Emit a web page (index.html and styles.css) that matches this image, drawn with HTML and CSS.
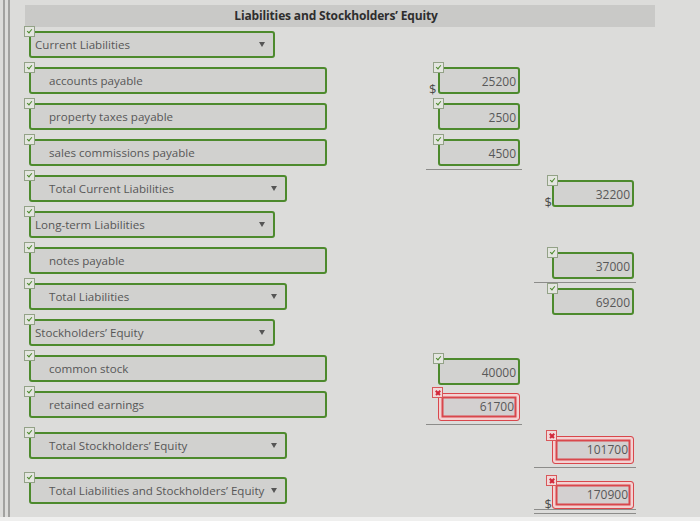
FILE: index.html
```html
<!DOCTYPE html>
<html>
<head>
<meta charset="utf-8">
<link rel="stylesheet" href="styles.css">
</head>
<body>
<div class="page">
  <div class="rail"></div>
  <div class="sheet">
    <div class="title">Liabilities and Stockholders’ Equity</div>

    <div class="row">
      <div class="field sel head"><span class="ok"></span><span class="lbl">Current Liabilities</span><span class="arrow"></span></div>
    </div>

    <div class="row">
      <div class="field txt"><span class="ok"></span><span class="lbl">accounts payable</span></div>
      <div class="mid"><span class="cur">$</span><div class="num"><span class="ok"></span>25200</div></div>
    </div>

    <div class="row">
      <div class="field txt"><span class="ok"></span><span class="lbl">property taxes payable</span></div>
      <div class="mid"><span class="cur"></span><div class="num"><span class="ok"></span>2500</div></div>
    </div>

    <div class="row">
      <div class="field txt"><span class="ok"></span><span class="lbl">sales commissions payable</span></div>
      <div class="mid line"><span class="cur"></span><div class="num"><span class="ok"></span>4500</div></div>
    </div>

    <div class="row">
      <div class="field sel total"><span class="ok"></span><span class="lbl">Total Current Liabilities</span><span class="arrow"></span></div>
      <div class="mid"></div>
      <div class="right"><span class="cur">$</span><div class="num"><span class="ok"></span>32200</div></div>
    </div>

    <div class="row">
      <div class="field sel head"><span class="ok"></span><span class="lbl">Long-term Liabilities</span><span class="arrow"></span></div>
    </div>

    <div class="row">
      <div class="field txt"><span class="ok"></span><span class="lbl">notes payable</span></div>
      <div class="mid"></div>
      <div class="right line"><span class="cur"></span><div class="num"><span class="ok"></span>37000</div></div>
    </div>

    <div class="row">
      <div class="field sel total"><span class="ok"></span><span class="lbl">Total Liabilities</span><span class="arrow"></span></div>
      <div class="mid"></div>
      <div class="right"><span class="cur"></span><div class="num"><span class="ok"></span>69200</div></div>
    </div>

    <div class="row">
      <div class="field sel head"><span class="ok"></span><span class="lbl">Stockholders’ Equity</span><span class="arrow"></span></div>
    </div>

    <div class="row">
      <div class="field txt"><span class="ok"></span><span class="lbl">common stock</span></div>
      <div class="mid low"><span class="cur"></span><div class="num"><span class="ok"></span>40000</div></div>
    </div>

    <div class="row">
      <div class="field txt"><span class="ok"></span><span class="lbl">retained earnings</span></div>
      <div class="mid low line"><span class="cur"></span><div class="num bad"><span class="no"></span>61700</div></div>
    </div>

    <div class="row r12">
      <div class="field sel total"><span class="ok"></span><span class="lbl">Total Stockholders’ Equity</span><span class="arrow"></span></div>
      <div class="mid"></div>
      <div class="right line"><span class="cur"></span><div class="num bad"><span class="no"></span>101700</div></div>
    </div>

    <div class="row r13">
      <div class="field sel total"><span class="ok"></span><span class="lbl">Total Liabilities and Stockholders’ Equity</span><span class="arrow"></span></div>
      <div class="mid"></div>
      <div class="right dline"><span class="cur">$</span><div class="num bad"><span class="no"></span>170900</div></div>
    </div>
  </div>
</div>
</body>
</html>
```

FILE: styles.css
```css
* { box-sizing: border-box; }
html, body { margin: 0; padding: 0; }
body {
  background: #dcdcda;
  font-family: "Open Sans", "Liberation Sans", sans-serif;
  color: #575757;
  width: 700px;
  height: 521px;
  overflow: hidden;
}
.page {
  display: flex;
  height: 521px;
  border-bottom: 4px solid #efefee;
}
.rail {
  margin-left: 3px;
  width: 7px;
  border-left: 2px solid #a2a2a0;
  border-right: 2px solid #a2a2a0;
  flex: none;
}
.sheet {
  flex: 1;
  padding-left: 19px;
  padding-top: 5px;
}
.title {
  margin-left: -4px;
  width: 630px;
  height: 22px;
  background: #c9c9c7;
  color: #2e2e2e;
  font-weight: 700;
  font-size: 12px;
  line-height: 22px;
  text-align: center;
  letter-spacing: -0.15px;
  padding-right: 8px;
}
.row {
  display: grid;
  grid-template-columns: 392px 110px 110px;
  grid-template-rows: 27px;
  margin-top: 4px;
  margin-bottom: 5px;
}
.row + .row { margin-top: 9px; margin-bottom: 0; }
.row.r12 { margin-top: 14px; }
.row.r13 { margin-top: 18px; }

.field {
  position: relative;
  height: 27px;
  border: 2px solid #4d8a2d;
  border-radius: 3px;
  background: #d1d1cf;
  display: flex;
  align-items: center;
  font-size: 11.6px;
  white-space: nowrap;
}
.field.txt { width: 298px; padding-left: 18px; }
.field.head { width: 246px; padding-left: 4px; }
.field.total { width: 258px; padding-left: 18px; }
.lbl { flex: 1; }
.arrow {
  width: 0;
  height: 0;
  border-left: 3px solid transparent;
  border-right: 3px solid transparent;
  border-top: 5px solid #555;
  margin-right: 8px;
}

.ok, .no {
  position: absolute;
  left: -7px;
  top: -7px;
  width: 11px;
  height: 11px;
  border: 1px solid #93a287;
  background: #e4e6e0;
}
.ok::after {
  content: "";
  position: absolute;
  left: 3px;
  top: 1px;
  width: 2px;
  height: 4px;
  border-right: 1.5px solid #4d8a2d;
  border-bottom: 1.5px solid #4d8a2d;
  transform: rotate(40deg);
}
.no {
  border-color: #d8585a;
  background: #f1d9d9;
}
.no::before, .no::after {
  content: "";
  position: absolute;
  left: 1.5px;
  top: 3.5px;
  width: 6px;
  height: 1.6px;
  background: #d2283a;
  transform: rotate(45deg);
}
.no::after { transform: rotate(-45deg); }

.mid, .right {
  position: relative;
  display: flex;
  align-items: flex-end;
  height: 27px;
}
.mid { margin-left: 5px; width: 96px; }
.right { margin-left: 3px; width: 102px; margin-top: 5px; }
.mid.low { margin-top: 3px; }
.cur {
  flex: 1;
  font-size: 13px;
  line-height: 14px;
  text-align: right;
  margin-bottom: -2px;
  color: #4a4a4a;
}
.mid .cur { flex: none; width: 12px; text-align: left; padding-left: 3px; }
.num {
  position: relative;
  width: 82px;
  height: 27px;
  border: 2px solid #4d8a2d;
  border-radius: 3px;
  background: #d2d2d0;
  font-size: 12px;
  text-align: right;
  padding-right: 2px;
  line-height: 24px;
  padding-top: 1px;
  color: #585858;
  flex: none;
}
.right .num { margin-right: 2px; }
.num.bad {
  border: 1.5px solid #d9474c;
  background: #d3d0d0;
  box-shadow: inset 0 0 0 2.5px #f3d2d2, inset 0 0 0 4.5px #d9474c;
  padding-right: 5px;
  height: 28px;
}
.line::after, .dline::after {
  content: "";
  position: absolute;
  left: 0;
  right: 0;
  bottom: -4px;
  border-bottom: 1px solid #8c8c8a;
}
.dline::after {
  bottom: -5px;
  height: 3px;
  border-top: 1px solid #8c8c8a;
}
```
